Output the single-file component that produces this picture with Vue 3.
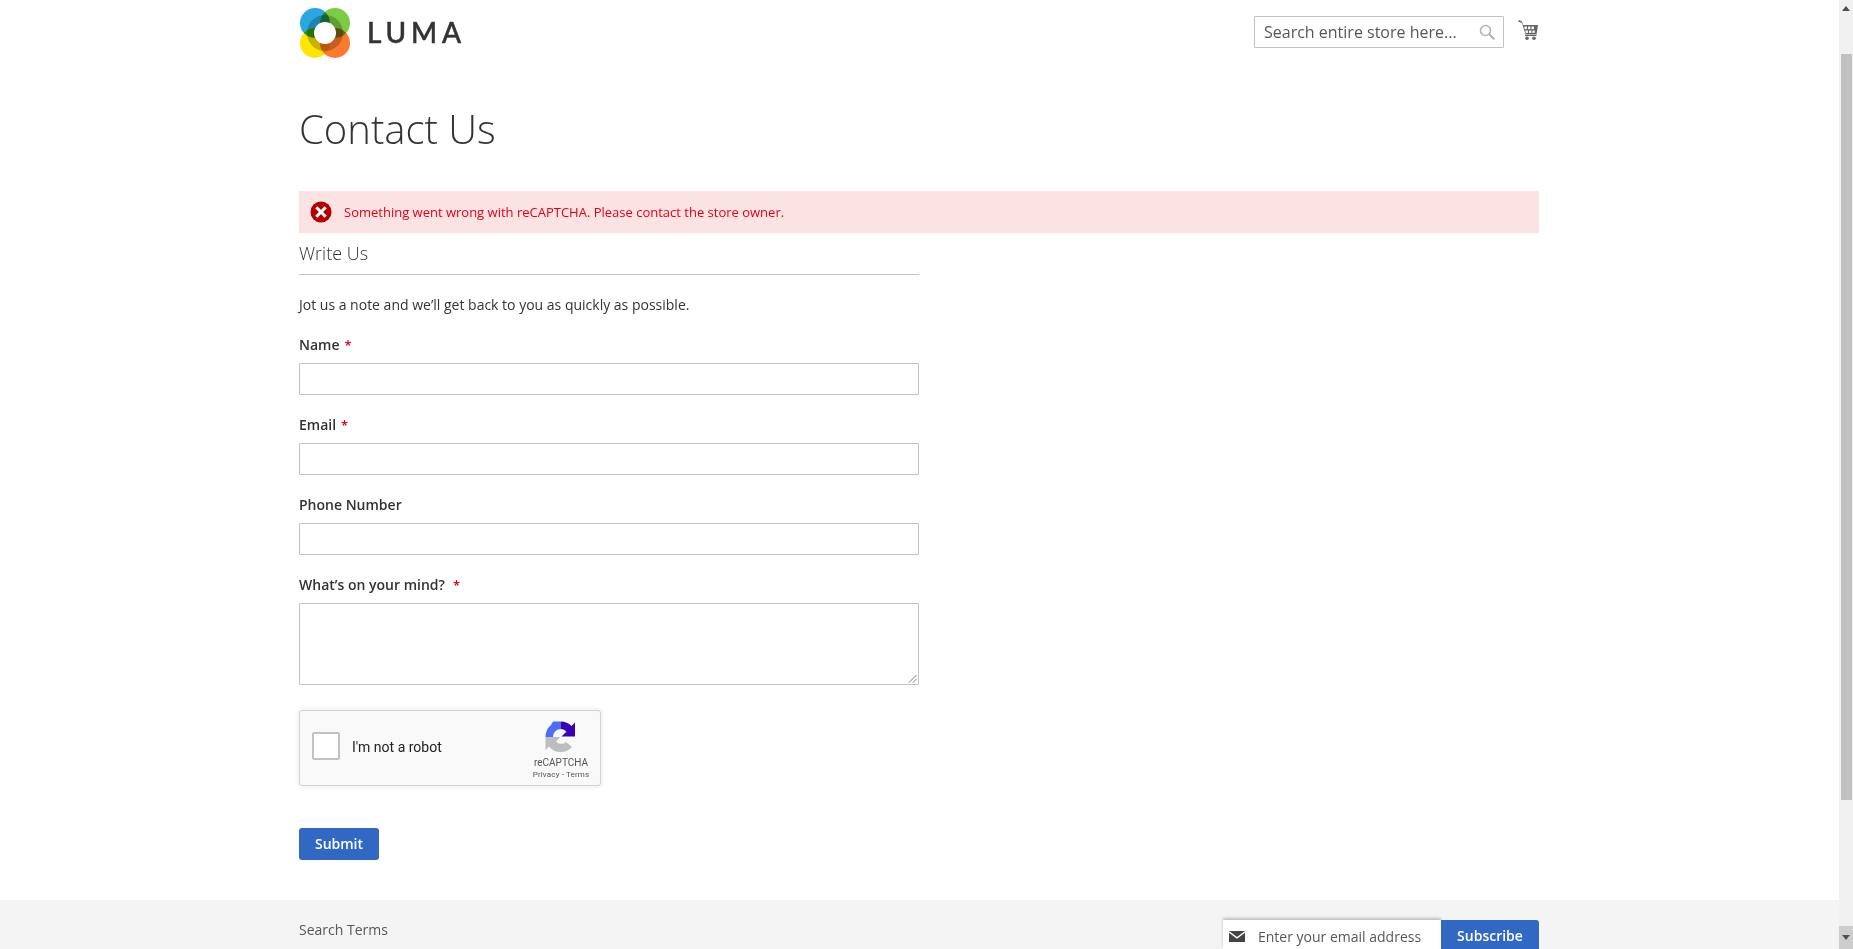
<script setup>
const fields = [
  { id: 'name', label: 'Name', req: true },
  { id: 'email', label: 'Email', req: true },
  { id: 'phone', label: 'Phone Number', req: false },
]
</script>

<template>
  <div class="shell">
    <div class="page">
      <div class="wrap">
        <header class="head">
          <a class="logo">
            <svg class="mark" width="52" height="52" viewBox="0 0 52 52">
              <g class="blend">
                <circle cx="16" cy="16" r="15" fill="#29a7e1" />
                <circle cx="36" cy="16" r="15" fill="#7ccb45" />
                <circle cx="16" cy="36" r="15" fill="#ffe500" />
                <circle cx="36" cy="36" r="15" fill="#fb7a2c" />
              </g>
              <circle cx="26" cy="26" r="18" fill="#000" opacity=".22" />
              <circle cx="26" cy="26" r="11" fill="#fff" />
            </svg>
            <span class="word">LUMA</span>
          </a>
          <div class="tools">
            <div class="search">
              <span class="ph">Search entire store here...</span>
              <svg width="18" height="18" viewBox="0 0 18 18" fill="none" stroke="#b5b5b5">
                <circle cx="7.5" cy="7.5" r="5" stroke-width="1.6" />
                <path d="M11.3 11.3l5 5" stroke-width="2.2" />
              </svg>
            </div>
            <svg class="cart" width="20" height="20" viewBox="0 0 20 20" fill="#666">
              <path d="M0 1.600L1 0l3 1.500L5.200 5H20l-1.500 9.500H7.600L4 3z" />
              <g fill="#fff">
                <rect x="6.500" y="6.500" width="2.400" height="2.600" />
                <rect x="10" y="6.500" width="2.400" height="2.600" />
                <rect x="13.500" y="6.500" width="2.400" height="2.600" />
                <rect x="7.500" y="10.500" width="2.400" height="2.400" />
                <rect x="11" y="10.500" width="2.400" height="2.400" />
                <rect x="14.500" y="10.500" width="2.200" height="2.400" />
              </g>
              <rect x="7" y="15" width="11.500" height="1" />
              <circle cx="9" cy="18.200" r="1.800" />
              <circle cx="16" cy="18.200" r="1.800" />
            </svg>
          </div>
        </header>

        <h1 class="title">Contact Us</h1>

        <div class="error">
          <svg width="22" height="22" viewBox="0 0 22 22">
            <circle cx="11" cy="11" r="10.500" fill="#b30000" />
            <path d="M6.300 6.300l9.400 9.400M15.700 6.300l-9.400 9.400" stroke="#fff" stroke-width="3" />
          </svg>
          <span>Something went wrong with reCAPTCHA. Please contact the store owner.</span>
        </div>

        <form class="form" @submit.prevent>
          <div class="legend">Write Us</div>
          <p class="note">Jot us a note and we’ll get back to you as quickly as possible.</p>
          <div v-for="f in fields" :key="f.id" class="field">
            <label class="lab">{{ f.label }}<span v-if="f.req" class="star">*</span></label>
            <div class="box"></div>
          </div>
          <div class="field">
            <label class="lab">What’s on your mind?<span class="star wide">*</span></label>
            <div class="box area">
              <svg class="grip" width="9" height="9" viewBox="0 0 9 9" stroke="#777" fill="none">
                <path d="M8.500 1L1 8.500M8.500 5L5 8.500" />
              </svg>
            </div>
          </div>
          <div class="captcha">
            <div class="check"></div>
            <span class="robot">I'm not a robot</span>
            <div class="brand">
              <svg width="32" height="32" viewBox="0 0 32 32">
                <path d="M.5 16A15.500 15.500 0 0 1 6 4L8 .5h8V8a8 8 0 0 0-8 8z" fill="#4d6cf8" />
                <path d="M16 .5A15.500 15.500 0 0 1 26.500 5L30 1.500v14H16.500l5-5A8 8 0 0 0 16 8z" fill="#3b00b3" />
                <path d="M.5 16h15L11 20.500a7 7 0 0 0 10 .5l6 5a15 15 0 0 1-11 5 15 15 0 0 1-12-5.500L.5 29z" fill="#bdbdbd" />
              </svg>
              <span class="rc">reCAPTCHA</span>
              <span class="terms">Privacy - Terms</span>
            </div>
          </div>
          <button class="submit" type="button">Submit</button>
        </form>
      </div>

      <footer class="foot">
        <div class="foot-in">
          <a class="terms-link">Search Terms</a>
          <div class="news">
            <div class="mail">
              <svg width="16" height="11" viewBox="0 0 16 11" fill="#444">
                <path d="M0 0h16L8 6z" />
                <path d="M0 1.800V11h16V1.800L8 7.800z" />
              </svg>
              <span>Enter your email address</span>
            </div>
            <button class="sub" type="button">Subscribe</button>
          </div>
        </div>
      </footer>
    </div>

    <div class="bar">
      <div class="arrow"><span class="up"></span></div>
      <div class="track"><div class="thumb"></div></div>
      <div class="arrow low"><span class="down"></span></div>
    </div>
  </div>
</template>

<style>
html, body { margin: 0; overflow: hidden; }
</style>

<style scoped>
.shell { display: flex; height: 949px; overflow: hidden; font-family: "Open Sans", sans-serif; color: #333; font-size: 14px; background: #fff; }
.page { flex: 1; min-width: 0; display: flex; flex-direction: column; }
.wrap { width: 1240px; margin-left: 299px; flex: 1; }
.head { display: flex; justify-content: space-between; height: 65px; padding-top: 7px; box-sizing: border-box; }
.logo { display: flex; align-items: center; height: 52px; }
.mark { display: block; }
.blend { isolation: isolate; }
.blend circle { mix-blend-mode: multiply; }
.word { font-family: Lato, sans-serif; font-size: 28px; font-weight: 500; letter-spacing: 4.800px; margin: -2px 0 0 16px; color: #333; -webkit-text-stroke: .5px #333; }
.tools { display: flex; gap: 14px; align-items: flex-start; margin-top: 9px; }
.search { width: 250px; height: 32px; box-sizing: border-box; border: 1px solid #c2c2c2; border-radius: 1px; display: flex; align-items: center; justify-content: space-between; padding: 0 7px 0 9px; }
.ph { font-size: 16px; color: #575757; white-space: nowrap; }
.cart { margin-top: 4px; margin-right: 1px; }
.title { margin: 41px 0 0; font-size: 40px; font-weight: 300; line-height: 46px; height: 46px; color: #333; }
.error { margin-top: 39px; height: 42px; background: #fbe2e3; color: #e2001a; font-size: 13px; display: flex; align-items: center; padding-left: 11px; gap: 12px; }
.form { width: 620px; display: block; }
.legend { font-size: 18px; font-weight: 300; line-height: 24px; padding: 8px 0 9px; border-bottom: 1px solid #c6c6c6; }
.note { margin: 20px 0 0; line-height: 20px; }
.field { margin-top: 20px; }
.lab { display: block; font-weight: 600; line-height: 20px; }
.star { color: #e2001a; margin-left: 5px; font-size: 13px; }
.star.wide { margin-left: 8px; }
.box { margin-top: 8px; height: 32px; box-sizing: border-box; border: 1px solid #c2c2c2; border-radius: 1px; position: relative; }
.area { height: 82px; }
.grip { position: absolute; right: 1px; bottom: 1px; }
.captcha { margin-top: 25px; width: 302px; height: 76px; box-sizing: border-box; background: #f9f9f9; border: 1px solid #d3d3d3; border-radius: 3px; box-shadow: 0 0 4px 1px rgba(0,0,0,.08); display: flex; align-items: flex-start; font-family: Roboto, sans-serif; }
.check { width: 24px; height: 24px; margin: 21px 0 0 12px; background: #fff; border: 2px solid #c1c1c1; border-radius: 2px; }
.robot { font-size: 14px; color: #222; margin: 27px 0 0 12px; line-height: 18px; }
.brand { margin-left: auto; width: 70px; margin-right: 4px; padding-top: 10px; display: flex; flex-direction: column; align-items: center; color: #555; }
.rc { font-size: 10px; margin-top: 4px; line-height: 12px; }
.terms { font-size: 8px; line-height: 12px; letter-spacing: .15px; }
.submit { display: block; margin-top: 42px; width: 80px; height: 32px; border: 0; border-radius: 3px; background: #3068c4; color: #fff; font: 600 14px "Open Sans", sans-serif; padding: 0 0 2px; }
.foot { background: #f4f4f4; height: 49px; flex: none; }
.foot-in { width: 1240px; margin-left: 299px; display: flex; justify-content: space-between; }
.terms-link { margin-top: 20px; line-height: 20px; color: #575757; }
.news { display: flex; margin-top: 20px; }
.mail { width: 218px; height: 29px; box-sizing: border-box; background: #fff; box-shadow: 0 -2px 3px rgba(0,0,0,.22); display: flex; align-items: flex-start; padding: 7px 0 0 6px; gap: 13px; color: #575757; border-radius: 1px 0 0 0; }
.mail svg { margin-top: 4px; }
.mail span { line-height: 20px; }
.sub { width: 98px; height: 29px; border: 0; border-radius: 0 3px 0 0; background: #3068c4; color: #fff; font: 600 14px "Open Sans", sans-serif; padding: 1px 0 0; }
.bar { width: 14px; flex: none; background: #f1f1f1; display: flex; flex-direction: column; }
.arrow { height: 17px; display: flex; align-items: center; justify-content: center; flex: none; }
.low { height: 23px; background: #cdcdcd; }
.up { border: 4px solid transparent; border-top: 0; border-bottom: 5px solid #505050; }
.down { border: 4px solid transparent; border-bottom: 0; border-top: 5px solid #505050; }
.track { flex: 1; padding-top: 37px; }
.thumb { height: 746px; margin: 0 1px 0 2px; background: #c1c1c1; }
</style>
